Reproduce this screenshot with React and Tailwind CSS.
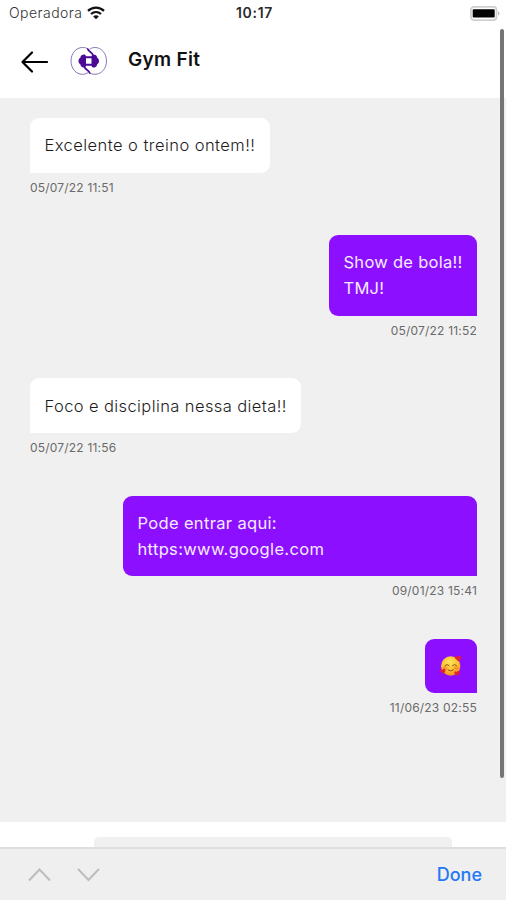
const messages = [
  { id: 1, mine: false, lines: ["Excelente o treino ontem!!"], date: "05/07/22 11:51", width: "w-[240px]", spacing: "tracking-[0.45px]" },
  { id: 2, mine: true, lines: ["Show de bola!!", "TMJ!"], date: "05/07/22 11:52", width: "w-[148px]", spacing: "tracking-[0.28px]" },
  { id: 3, mine: false, lines: ["Foco e disciplina nessa dieta!!"], date: "05/07/22 11:56", width: "w-[271px]", spacing: "tracking-[0.4px]" },
  { id: 4, mine: true, lines: ["Pode entrar aqui:", "https:www.google.com"], date: "09/01/23 15:41", width: "w-[354px]", spacing: "tracking-[0.34px]" },
  { id: 5, mine: true, emoji: true, date: "11/06/23 02:55", width: "w-[52px]" },
];

function WifiIcon() {
  return (
    <svg width="18" height="14" viewBox="0 0 18 14" fill="none" stroke="#111" strokeWidth="2.300">
      <path d="M1 4.800C5.500.5 12.500.5 17 4.800" />
      <path d="M4 8c2.900-2.600 7.100-2.600 10 0" />
      <path d="M9 13.200 6.200 10.400c1.600-1.400 4-1.400 5.600 0z" fill="#111" stroke="none" />
    </svg>
  );
}

function BatteryIcon() {
  return (
    <svg width="30" height="15" viewBox="0 0 30 15">
      <rect x="0.9" y="0.9" width="25.600" height="13.200" rx="3" fill="#fff" stroke="#cfcfcf" strokeWidth="1.800" />
      <rect x="2.700" y="3.200" width="22" height="8.400" rx="0.8" fill="#000" />
      <path d="M28 5.200c2 .8 2 3.600 0 4.400z" fill="#bbb" />
    </svg>
  );
}

function Logo() {
  return (
    <svg width="38" height="30" viewBox="0 0 38 30" fill="none">
      <g stroke="#7a68b0" strokeWidth="0.9">
        <path d="M18 2.800C16.500 1.900 14.800 1.500 12.500 1.500 6 1.500 1 7.500 1 15s5 13.300 11.500 13.300c2.300 0 4.300-.7 5.700-1.900" />
        <path d="M19.500 27c1.500.9 3.200 1.300 5.500 1.300 6.500 0 11.500-5.800 11.500-13.300S31.500 1.500 25 1.500c-2.300 0-4.300.8-5.700 2" />
      </g>
      <g stroke="#4b0a96" strokeWidth="1.700" strokeLinecap="round">
        <path d="M17.800 3c.8 3 4.700 3.200 5.700 7" />
        <path d="M19.700 27c-.8-3-4.700-3.200-5.700-7" />
      </g>
      {/* dumbbell */}
      <path
        fill="#4b0a96"
        fillRule="evenodd"
        d="M12 9c2-1 3.700-.5 4 1.300h5.500c.3-1.800 2-2.300 4-1.300 1 .5 1.500 1.400 1.500 2.500 1.300.8 2 2 2 3.500s-.7 2.700-2 3.500c0 1.100-.5 2-1.500 2.500-2 1-3.700.5-4-1.300H16c-.3 1.800-2 2.300-4 1.300-1-.5-1.500-1.400-1.500-2.500-1.300-.8-2-2-2-3.500s.7-2.700 2-3.500c0-1.100.5-2 1.500-2.500zM16 12.300v5.400h5.500v-5.400z"
      />
    </svg>
  );
}

function LoveFace() {
  return (
    <svg width="22" height="22" viewBox="0 0 22 22" role="img" aria-label="🥰">
      <defs>
        <radialGradient id="face" cx="0.45" cy="0.3" r="0.7">
          <stop offset="0" stopColor="#ffe45c" />
          <stop offset="0.65" stopColor="#fbbf2c" />
          <stop offset="1" stopColor="#ee8b1c" />
        </radialGradient>
      </defs>
      <circle cx="10.700" cy="11" r="9.700" fill="url(#face)" />
      <ellipse cx="5" cy="13" rx="2.500" ry="1.800" fill="#f4782a" opacity=".6" />
      <ellipse cx="16" cy="13" rx="2.500" ry="1.800" fill="#f4782a" opacity=".6" />
      <path d="M5 10.500q2-2 4 0M12.500 10.500q2-2 4 0M8 15q2.700 2 5.400 0" fill="none" stroke="#8a5016" strokeWidth="1" strokeLinecap="round" />
      <g fill="#e5202e">
        <path d="M18.500 6.500 15 3.300c-1-1.700 1.200-3 2.500-1.500 1.300-1.700 4-.8 3.700 1.200z" />
        <path d="m3.800 19-3.300-2.600c-1-1.700 1-3 2.200-1.700.9-1.800 3.300-.9 2.800.9z" />
        <path d="m17.500 21-3-2.800c-.8-1.500 1-2.700 2.200-1.300 1.200-1.500 3.500-.7 3 1.100z" />
      </g>
    </svg>
  );
}

function Message({ message }) {
  const { mine, lines, emoji, date, width, spacing } = message;

  return (
    <div className={`flex flex-col mb-[35.6px] ${mine ? "items-end" : "items-start"}`}>
      <div
        className={`px-[14.5px] py-[14.3px] ${width} ${
          mine
            ? "bg-[#8c10ff] text-[#f6eaff] rounded-[9px] rounded-br-none"
            : "bg-white text-[#1c1c1c] font-light rounded-[9px] rounded-bl-none"
        }`}
      >
        {emoji ? (
          <div className="h-[26px] flex items-center justify-center">
            <LoveFace />
          </div>
        ) : (
          lines.map((line) => (
            <p key={line} className={`text-[16.5px] leading-[26px] whitespace-nowrap ${spacing}`}>
              {line}
            </p>
          ))
        )}
      </div>
      <span className="mt-[5px] h-[22px] text-xs leading-[19px] tracking-[0.2px] text-[#6a6a6a] whitespace-nowrap">{date}</span>
    </div>
  );
}

export default function App() {
  return (
    <div className="relative w-[506px] h-[900px] flex flex-col overflow-hidden bg-white font-['Inter',sans-serif]">
      {/* status bar */}
      <div className="h-[26px] shrink-0 grid grid-cols-3 items-center pl-[9px] pr-[6px]">
        <div className="flex items-center gap-[5px]">
          <span className="text-sm font-light text-[#333] tracking-[0.45px]">Operadora</span>
          <WifiIcon />
        </div>
        <span className="text-center text-sm font-semibold text-[#2a2a2a] tracking-[0.7px]">10:17</span>
        <div className="flex justify-end">
          <BatteryIcon />
        </div>
      </div>

      {/* header */}
      <header className="h-[72px] shrink-0 flex items-center pl-[21px]">
        <svg width="27" height="22" viewBox="0 0 27 22" fill="none" stroke="#000" strokeWidth="2.200" strokeLinecap="round" strokeLinejoin="round">
          <path d="M26 11H1.500M11 1.500 1.500 11l9.500 9.500" />
        </svg>
        <div className="ml-[22px] mb-[2px]">
          <Logo />
        </div>
        <h1 className="ml-5 mb-[3px] text-[19px] font-semibold text-[#111] tracking-[0.3px]">Gym Fit</h1>
      </header>

      <main className="flex-1 bg-[#f0f0f0] pt-5 pl-[30px] pr-[29px]">
        {messages.map((m) => (
          <Message key={m.id} message={m} />
        ))}
      </main>

      {/* message input, mostly behind the keyboard bar */}
      <div className="h-[25px] shrink-0 bg-white pt-[15px] pl-[94px] pr-[54px]">
        <div className="h-full rounded-t-[5px] bg-[#f0f0f0]" />
      </div>

      <footer className="h-[53px] shrink-0 flex items-center justify-between bg-[#efefef] border-t-2 border-[#dedede] pl-7 pr-6">
        <div className="flex gap-[26px]">
          <svg width="23" height="14" viewBox="0 0 23 14" fill="none" stroke="#bdbdbd" strokeWidth="2">
            <path d="M1 12.500 11.500 1.500 22 12.500" />
          </svg>
          <svg width="23" height="14" viewBox="0 0 23 14" fill="none" stroke="#bdbdbd" strokeWidth="2">
            <path d="M1 1 11.500 12 22 1" />
          </svg>
        </div>
        <button className="text-lg font-medium text-[#2478f5]">Done</button>
      </footer>

      {/* scroll indicator */}
      <div className="absolute top-[29px] right-[2.5px] w-[3.5px] h-[749px] rounded-full bg-[#757575]" />
    </div>
  );
}
